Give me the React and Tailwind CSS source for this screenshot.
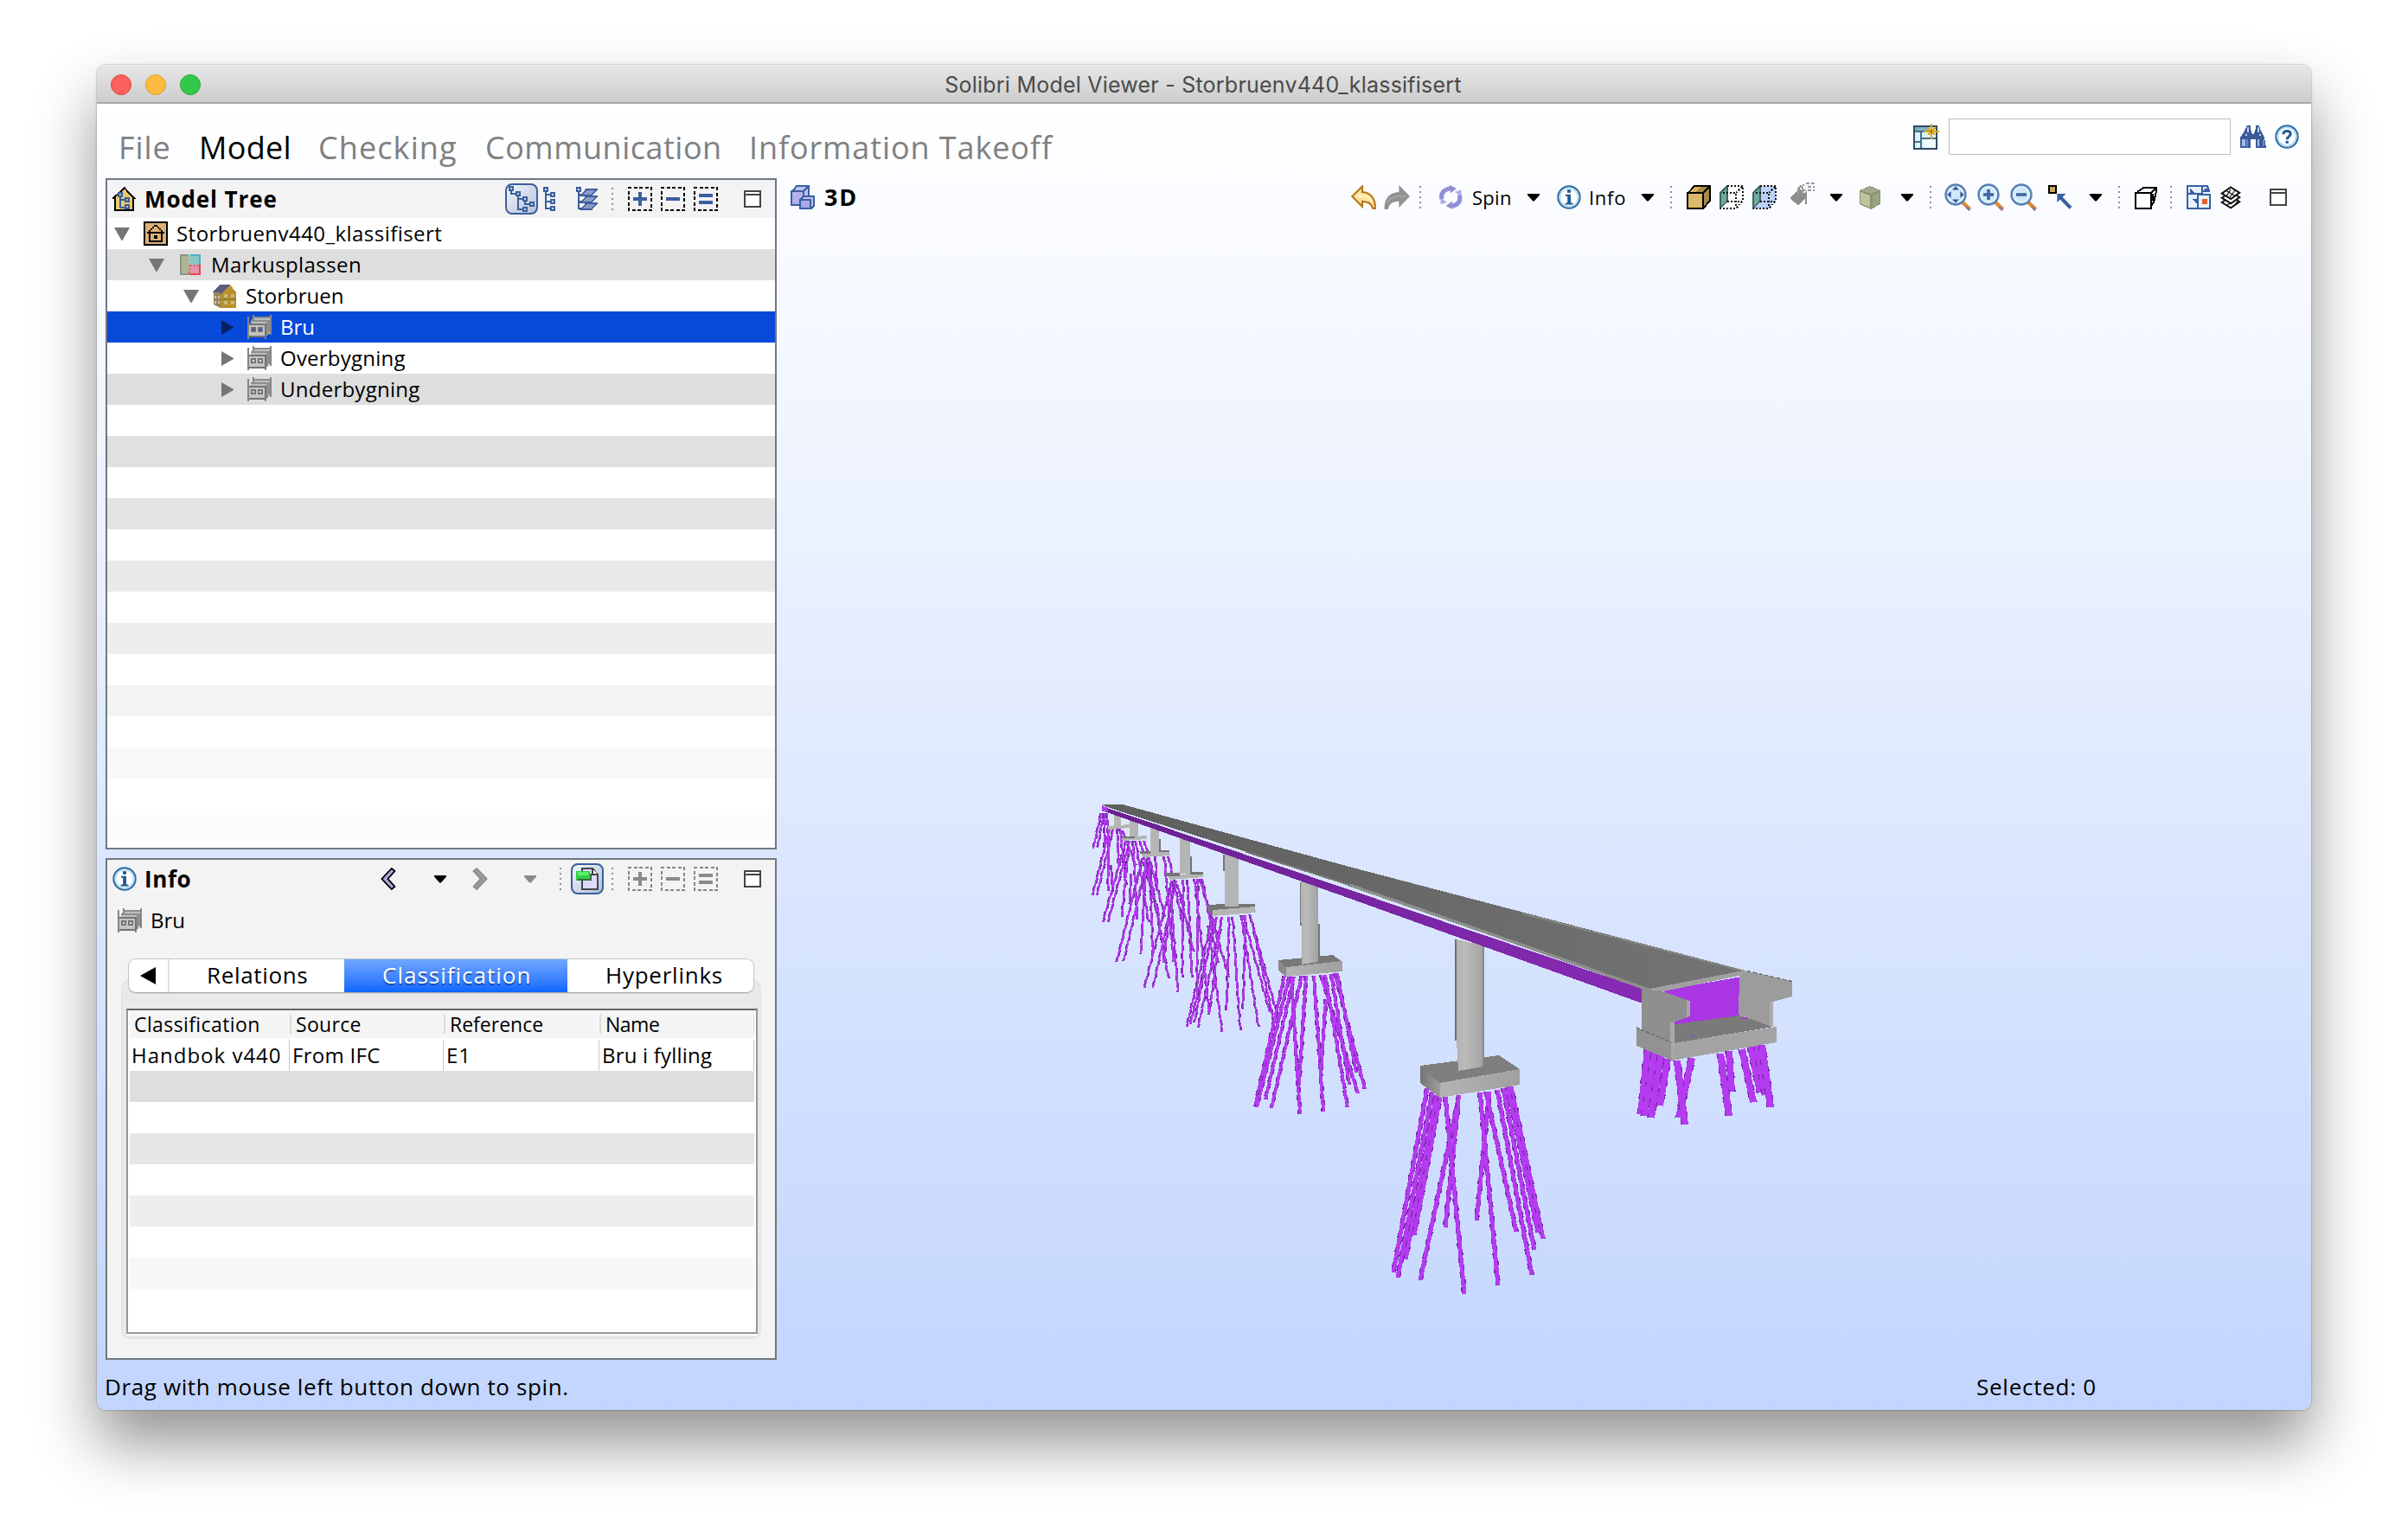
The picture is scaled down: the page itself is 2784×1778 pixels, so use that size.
import React from "react";

const BLUE = "#3a5f9f";

/* ---------- icons: drawn on a 14-unit grid, two pixels per unit ---------- */

function Icon({ children, className = "", w = 14, h = 14, smooth = false }) {
  return (
    <svg
      width={w * 2}
      height={h * 2}
      viewBox={`0 0 ${w} ${h}`}
      shapeRendering={smooth ? "auto" : "crispEdges"}
      className={`shrink-0 ${className}`}
      fill="none"
    >
      {children}
    </svg>
  );
}

function Node({ x, y }) {
  return <rect x={x + 0.5} y={y + 0.5} width="2" height="2" fill="#cdd6e6" stroke={BLUE} />;
}

function Dots({ className = "" }) {
  return (
    <svg width="2" height="26" className={`shrink-0 ${className}`} shapeRendering="crispEdges">
      {[0, 6, 12, 18, 24].map((y) => (
        <rect key={y} y={y} width="2" height="2" fill="#909090" />
      ))}
    </svg>
  );
}

function Caret({ className = "", color = "#000" }) {
  return (
    <svg width="14" height="9" viewBox="0 0 14 9" className={`shrink-0 ${className}`}>
      <path d="M0 0H14V1.5L7.8 8.6H6.2L0 1.5Z" fill={color} />
    </svg>
  );
}

function WindowIcon({ className = "" }) {
  return (
    <Icon w={10} h={10} className={className}>
      <rect x="0.5" y="0.5" width="9" height="9" fill="#fff" stroke="#444" />
      <path d="M0 2.5H10" stroke="#444" />
    </Icon>
  );
}

function BoxedSign({ kind, color = "#000", sign = BLUE, className = "" }) {
  return (
    <Icon className={className}>
      <rect x="0.5" y="0.5" width="13" height="13" stroke={color} strokeDasharray="2 1.25" strokeDashoffset="0.5" />
      {kind === "plus" && <path d="M3 7H11M7 3V11" stroke={sign} strokeWidth="2" />}
      {kind === "minus" && <path d="M3 7H11" stroke={sign} strokeWidth="2" />}
      {kind === "equal" && <path d="M3 5H11M3 9H11" stroke={sign} strokeWidth="2" />}
    </Icon>
  );
}

function ModelTreeIcon() {
  return (
    <Icon>
      <path d="M1.5 13.5V6.5H0.5L7 0.7L12.5 6.5H12V13.5Z" fill="#e9cb6b" stroke="#000" />
      <path d="M4.5 5V12M4.5 7.5H8M4.5 12H8" stroke={BLUE} />
      <rect x="3.5" y="3.5" width="2" height="2" stroke={BLUE} fill="#cbb98a" />
      <rect x="7.5" y="6.5" width="2" height="2" stroke={BLUE} fill="#cbb98a" />
      <rect x="7.5" y="10.5" width="2" height="2" stroke={BLUE} fill="#cbb98a" />
    </Icon>
  );
}

function HierarchyIcon() {
  return (
    <Icon w={15} h={15}>
      <path d="M1.5 3V4.5H4M5.5 6V13.5H8M5.5 7.5H8M9.5 9V10.5H12" stroke={BLUE} />
      <Node x={0} y={0} />
      <Node x={4} y={3} />
      <Node x={8} y={6} />
      <Node x={12} y={9} />
      <Node x={8} y={12} />
    </Icon>
  );
}

function FlatTreeIcon({ className }) {
  return (
    <Icon w={7} className={className}>
      <path d="M1.5 3V12.5H4M1.5 4.5H4M1.5 8.5H4" stroke={BLUE} />
      <Node x={0} y={0} />
      <Node x={4} y={3} />
      <Node x={4} y={7} />
      <Node x={4} y={11} />
    </Icon>
  );
}

function LayerTreeIcon({ className }) {
  return (
    <Icon w={13} className={className}>
      <path d="M1.5 3V12.5H4M1.5 4.5H4M1.5 8.5H4" stroke={BLUE} />
      <path d="M3 13H9L12 9.5H6Z" fill="#8b9cc4" stroke={BLUE} strokeWidth="0.8" />
      <path d="M3 9H9L12 5.5H6Z" fill="#8b9cc4" stroke={BLUE} strokeWidth="0.8" />
      <path d="M3 5H9L12 1.5H6Z" fill="#8b9cc4" stroke={BLUE} strokeWidth="0.8" />
      <Node x={0} y={0} />
    </Icon>
  );
}

function ProjectIcon() {
  return (
    <Icon>
      <rect x="0.5" y="0.5" width="13" height="13" fill="#dcb178" stroke="#000" />
      <path d="M2 6.5H12M3.5 6V11.5H10.5V6" stroke="#000" />
      <path d="M3 5H4V6H3ZM4 4H5V5H4ZM5 3H6V4H5ZM6 2H8V3H6ZM8 3H9V4H8ZM9 4H10V5H9ZM10 5H11V6H10Z" fill="#000" />
      <rect x="6" y="8" width="2" height="2" fill="#000" />
    </Icon>
  );
}

function SiteIcon() {
  return (
    <Icon>
      <rect x="1" y="1" width="12" height="12" fill="#8b9485" />
      <rect x="2" y="2" width="5" height="10" fill="#adb592" />
      <rect x="7" y="1" width="6" height="6" fill="#4fb0c0" />
      <rect x="7" y="2" width="5" height="5" fill="#8cc6c2" />
      <rect x="7" y="7" width="6" height="6" fill="#ea4550" />
      <rect x="7" y="7" width="5" height="5" fill="#e294b2" />
      <path d="M6.5 1V7" stroke="#7de6f0" strokeDasharray="1 1" />
      <path d="M6.5 7V13M7 7.5H12" stroke="#f06070" strokeDasharray="1 1" />
    </Icon>
  );
}

function BuildingIcon() {
  return (
    <Icon className="-mx-px" w={15}>
      <path d="M1 5L5 5V14L1 12Z" fill="#94855c" />
      <path d="M5 6L10.5 0.5L14 5V14H5Z" fill="#b8922c" />
      <path d="M0 5L1 4L5 0.5H10.5L5 6V5Z" fill="#5c5c82" />
      <path d="M1.5 7.5H4.5M1.5 10.5H4.5" stroke="#cfc4a8" strokeDasharray="1 1" strokeWidth="1.5" />
      <path d="M7 7H9M11 7H13M7 11H9M11 11H13" stroke="#d2b483" strokeWidth="2" />
      <path d="M5 9H14" stroke="#8d8431" strokeWidth="0.8" />
    </Icon>
  );
}

function StoreyIcon({ hole = "#fff" }) {
  return (
    <Icon>
      <path d="M3 2H13V11H11V5H2Z" fill="#bdbdbd" />
      <path d="M0.5 1V14M3.5 0V3M13.5 0V11.5M10.5 5V14" stroke="#868686" />
      <path d="M4 1.5H13M2 3.5H12M11.5 3V12M12.5 3V10" stroke="#8e8e8e" />
      <rect x="1" y="5" width="10" height="7" fill="#c4c4c4" />
      <path d="M1 5.5H11M1 12.5H11M10.5 5V13" stroke="#747474" />
      <rect x="2.5" y="7.5" width="2" height="2" fill={hole} stroke="#747474" />
      <rect x="6.5" y="7.5" width="2" height="2" fill={hole} stroke="#747474" />
    </Icon>
  );
}

function InfoIcon({ className }) {
  return (
    <Icon smooth className={className}>
      <circle cx="7" cy="7" r="6.3" fill="#fff" stroke="#2f6da6" strokeWidth="1.1" />
      <circle cx="7" cy="7" r="5.3" stroke="#b9dcf0" strokeWidth="0.9" />
      <rect x="6" y="2.6" width="2" height="1.8" fill="#1f5a94" />
      <path d="M5 5.4H8V10.2H9.2V11.2H4.9V10.2H6.1V6.4H5Z" fill="#1f5a94" />
    </Icon>
  );
}

function HelpIcon({ className }) {
  return (
    <Icon smooth className={className}>
      <circle cx="7" cy="7" r="6.3" fill="#fff" stroke="#2f6da6" strokeWidth="1.1" />
      <circle cx="7" cy="7" r="5.3" stroke="#b9dcf0" strokeWidth="0.9" />
      <path d="M4.9 5.6C4.9 3.2 9.1 3.2 9.1 5.4C9.1 6.8 7.1 6.8 7.1 8.6" stroke="#1f5a94" strokeWidth="1.5" />
      <rect x="6.3" y="9.4" width="1.6" height="1.5" fill="#1f5a94" />
    </Icon>
  );
}

function ThreeDIcon({ className }) {
  return (
    <Icon className={className}>
      <path d="M0.5 4.5L3.5 0.5H10.5V8.5L7.5 11.5H0.5Z" fill="#c4bff4" stroke={BLUE} />
      <path d="M0.5 3.5H7.5V11.5H0.5ZM7.5 3.5L10.5 0.5" stroke={BLUE} fill="#b5b0ee" />
      <path d="M5.5 8.5L7.5 6.5H13.5V12L12 13.5H5.5Z" fill="#c4bff4" stroke={BLUE} />
      <path d="M5.5 8.5H11.5V13.5H5.5Z" fill="#aba6ea" stroke={BLUE} />
    </Icon>
  );
}

function UndoIcon() {
  return (
    <Icon w={15} smooth>
      <path d="M0.7 6.5L6.5 0.7V4C11 4.2 14.2 7.6 13.9 13.4H12.6C11.6 10.4 10 9.6 6.5 9.4V12.4Z" fill="#fbe29a" stroke="#b87a1c" strokeWidth="1.1" />
      <path d="M2.8 6.2H7C9.8 6.4 11.6 7.8 12.4 9.8" stroke="#fff6d0" strokeWidth="1" />
    </Icon>
  );
}

function RedoIcon({ className }) {
  return (
    <Icon w={15} smooth className={className}>
      <path d="M15 6.5L8.7 0V4C3.5 4.2 0 7.5 0.3 14H2.4C3.2 10.6 4.8 9.6 8.7 9.4V13Z" fill="#929292" />
      <path d="M12.9 6.5H8C5 6.8 2.8 8 2 10.5" stroke="#a4a4a4" />
    </Icon>
  );
}

function SpinIcon({ className }) {
  return (
    <Icon smooth className={className}>
      <path d="M1.6 8.2C0.6 5 2.5 2.4 6.4 2" stroke="#9090da" strokeWidth="2.6" />
      <path d="M5.8 -0.2L10 2L6.6 4.6Z" fill="#8f92cf" />
      <path d="M11.6 5.6C12.8 9 10.8 11.8 7 12" stroke="#9090da" strokeWidth="2.6" />
      <path d="M7.6 9.2V14L3.8 12Z" fill="#8f92cf" />
      <path d="M9 4L12.6 2.8V6.5ZM4.6 10L0.8 11V7.4Z" fill="#a9a9f0" />
    </Icon>
  );
}

function SolidCubeIcon({ className }) {
  return (
    <Icon className={className}>
      <path d="M0.5 5L4.5 0.5H13.5V9L9.5 13.5H0.5Z" fill="#a88a45" stroke="#000" />
      <path d="M1.5 4.5L4.5 1.2H8L5 4.5Z" fill="#d9b25e" />
      <path d="M0.5 4.5H9.5V13.5H0.5Z" fill="#dcb96a" stroke="#000" />
      <path d="M9.5 4.5L13.5 0.5" stroke="#000" />
    </Icon>
  );
}

function DottedCubeIcon({ fill = "#fff", className }) {
  return (
    <Icon className={className}>
      <path d="M0.5 5L4.5 0.5H13.5V9L9.5 13.5H0.5Z" fill={fill} />
      <path d="M0.5 4.5L4.5 0.5V9L0.5 13.5Z" fill="#6cab9f" stroke="#45635e" strokeWidth="0.8" />
      <path d="M4.5 0.5H13.5V9L9.5 13.5H0.5" stroke="#111" strokeDasharray="1 1" />
      <path d="M2 4.5H9.5V13M9.5 4.5L13.5 0.5M4.5 9.5H13" stroke="#111" strokeDasharray="1 1" />
    </Icon>
  );
}

function PaintIcon({ className }) {
  return (
    <Icon className={className}>
      <path d="M0 8.5L5 3.5L8 6L9.5 5V12.5H8.5V9L4.5 13L0 9.5Z" fill="#8c8c8c" />
      <path d="M4.5 8V3.5L6 1.8L7 3V7" stroke="#9a9a9a" />
      <path d="M7 1.5H8M9 0.5H14M7 4.5H9M10 2.5H14M10 4.5H14" stroke="#9a9a9a" strokeDasharray="2 1" />
    </Icon>
  );
}

function GreenCubeIcon({ className }) {
  return (
    <Icon className={className}>
      <path d="M1 3L7 0.5L13 3V11L7.5 14L1 11Z" fill="#8c9470" />
      <path d="M2 3L7 1L12 3L7.5 5Z" fill="#a4aa90" />
      <path d="M1.6 4L7 6V13L1.6 10.6Z" fill="#bcc49c" />
      <path d="M8.4 6L12.4 4V10.6L8.4 12.8Z" fill="#9aa382" />
    </Icon>
  );
}

function LensIcon({ kind, className }) {
  return (
    <Icon w={16} h={16} smooth className={className}>
      <path d="M10 10.4L14.8 15" stroke="#e08a34" strokeWidth="2.2" />
      <path d="M12.6 13.6L14.6 15.6" stroke="#8a7a96" strokeWidth="1.2" />
      <circle cx="6.5" cy="6.5" r="5.7" fill="#cfe9fb" stroke="#5b81b5" strokeWidth="1.3" />
      <circle cx="6.5" cy="6.5" r="4.6" stroke="#e6f5ff" strokeWidth="0.8" />
      {kind === "plus" && <path d="M3.5 6.5H9.5M6.5 3.5V9.5" stroke="#3f649f" strokeWidth="1.8" />}
      {kind === "minus" && <path d="M3.5 6.5H9.5" stroke="#3f649f" strokeWidth="1.8" />}
      {kind === "fit" && (
        <path
          d="M6.5 1.6L8.5 3.8H4.500ZM6.5 11.4L8.5 9.2H4.5ZM1.6 6.5L3.8 4.5V8.5ZM11.4 6.5L9.2 4.5V8.5Z"
          fill="#3a5a96"
        />
      )}
    </Icon>
  );
}

function PickIcon({ className }) {
  return (
    <Icon smooth className={className}>
      <rect x="0.5" y="0.5" width="4" height="4" fill="#c9ac63" stroke="#000" />
      <path d="M7 7L13 13.2" stroke={BLUE} strokeWidth="2" />
      <path d="M5.2 5H10.2L5.2 10Z" fill={BLUE} />
    </Icon>
  );
}

function SectionBoxIcon({ className }) {
  return (
    <Icon className={className}>
      <path d="M0.5 4.5H9.5V13.5H0.5Z" fill="#fff" stroke="#000" />
      <path d="M1.5 4L5 1.5H12.5V3.5L11 10L9.5 12M9.5 4.5L12.5 1.5M10.5 5V9" stroke="#000" />
    </Icon>
  );
}

function MapIcon({ className }) {
  return (
    <Icon className={className}>
      <rect x="0.5" y="0.5" width="13" height="13" fill="#e6f3ff" />
      <path d="M0.5 0.5H9V5H0.5ZM0.5 5.5V13.5H13.5V5.5H6.5V13.5M9 3.5H13L12 0.5H9" stroke={BLUE} />
      <path d="M2 2L5 5H2ZM10 2H13L11 4ZM3 8H6V11Z" fill={BLUE} />
      <rect x="9" y="8" width="3" height="3" fill="#e1622a" />
    </Icon>
  );
}

function LayersIcon({ className }) {
  return (
    <Icon className={className} smooth>
      {[10, 7.4, 4.8].map((y) => (
        <path key={y} d={`M1.4 ${y}L6.5 ${y - 3.6}L11.6 ${y - 0.4}L6.6 ${y + 3.2}Z`} fill="#fff" stroke="#111" strokeWidth="1" />
      ))}
      <path d="M4 3.2L9 6.2M6.5 2.6L4 6.4M9 3L6 7" stroke="#111" strokeWidth="0.6" />
      <path d="M2 8L4.5 9M9 10.8L11 9.2M4 11.6L6.4 10.4" stroke="#111" strokeWidth="0.6" />
    </Icon>
  );
}

function LayoutIcon() {
  return (
    <Icon w={15} h={15}>
      <rect x="0.5" y="1.5" width="13" height="13" fill="#d9f3fb" stroke="#2f4a66" />
      <rect x="1" y="2" width="8" height="2" fill="#7fb2c4" />
      <path d="M1 4.5H9M4.5 5V14M1 10.5H4.5M4.5 8.5H13" stroke="#4a6e8a" />
      <rect x="6" y="9" width="7" height="5" fill="#eefbff" />
      <path d="M9 3H12V6H9Z" fill="#9ad04a" />
      <path d="M10.5 0V9M6 4.5H15M8.5 2.5L12.5 6.5M12.5 2.5L8.5 6.5" stroke="#dba413" />
      <rect x="10" y="4" width="1" height="1" fill="#a85a10" />
    </Icon>
  );
}

function BinocularsIcon({ className }) {
  return (
    <Icon w={15} h={13} className={className}>
      <path d="M4 0H6V2L7 5H8L9 2V0H11L12 3L14 7L15 13H9V8H6V13H0V7L2 4Z" fill="#3b5a98" />
      <path d="M1.5 8V12M2.5 8V12M10.5 8V12" stroke="#a9b9e2" />
      <path d="M4.5 1V4M10.5 1V4M3.5 5V6M11.5 5V6" stroke="#c3cff0" />
      <path d="M4 12.5V8M13.5 12V8" stroke="#6c86c4" />
    </Icon>
  );
}

function Chevron({ flip = false, className = "" }) {
  return (
    <Icon w={9} h={13} smooth className={`${flip ? "-scale-x-100" : ""} ${className}`}>
      <path
        d="M8.2 2L6.4 0.5L0.7 6.5L6.4 12.5L8.2 11L4.2 6.5Z"
        fill={flip ? "#9b9b9b" : "#aaa6e0"}
        stroke={flip ? "#8d8d8d" : "#000"}
        strokeWidth="0.9"
      />
    </Icon>
  );
}

function PageIcon() {
  return (
    <Icon w={13}>
      <path d="M3.5 1H9.5L12.5 4.5V13H3.5Z" fill="#dcdaf6" stroke="#454550" />
      <path d="M9.5 1.5V4.5H12.5" stroke="#454550" fill="#fff" />
      <rect x="0" y="2.4" width="8" height="5.4" fill="#2fd043" />
      <rect x="1" y="3" width="6" height="2" fill="#5cf06e" />
      <path d="M1 7.5H8.5V4" stroke="#3a6b42" strokeWidth="0.7" />
    </Icon>
  );
}

function ToggleButton({ children }) {
  return (
    <div className="flex h-9 w-[38px] shrink-0 items-center justify-center rounded-lg border-2 border-[#3a5f9f] bg-linear-to-br from-[#f3f6fa] to-[#b3c0d9]">
      {children}
    </div>
  );
}

/* ---------- model tree ---------- */

const TREE = [
  { label: "Storbruenv440_klassifisert", pad: "pl-2", track: "tracking-[0.46px]", open: true, icon: <ProjectIcon /> },
  { label: "Markusplassen", pad: "pl-12", track: "tracking-[0.42px]", open: true, icon: <SiteIcon /> },
  { label: "Storbruen", pad: "pl-[88px]", open: true, icon: <BuildingIcon /> },
  { label: "Bru", pad: "pl-32", selected: true, icon: <StoreyIcon hole="#0749d9" /> },
  { label: "Overbygning", pad: "pl-32", track: "tracking-[0.22px]", icon: <StoreyIcon /> },
  { label: "Underbygning", pad: "pl-32", track: "tracking-[0.25px]", icon: <StoreyIcon hole="#e4e4e4" /> },
];

const ROW_BG = ["bg-white", "bg-[#dedede]", "bg-white", "bg-[#0749d9]", "bg-white", "bg-[#dedede]"];
const TREE_FILL = [
  "bg-white", "bg-[#e0e0e0]", "bg-white", "bg-[#e4e4e4]", "bg-white", "bg-[#e9e9e9]", "bg-white",
  "bg-[#eeeeee]", "bg-white", "bg-[#f3f3f3]", "bg-white", "bg-[#f8f8f8]", "bg-white", "bg-[#fcfcfc]",
];
const TABLE_FILL = [
  "bg-[#dedede]", "bg-white", "bg-[#e6e6e6]", "bg-white", "bg-[#eeeeee]", "bg-white", "bg-[#f7f7f7]",
];

function Arrow({ open, selected }) {
  return (
    <svg width="18" height="17" viewBox="0 0 18 17" className="shrink-0">
      {open ? <path d="M0 1H18L9.5 16H8.5Z" fill="#757575" /> : <path d="M4 0L19 8.5L4 17Z" fill={selected ? "#0a1f66" : "#757575"} />}
    </svg>
  );
}

function ModelTreePanel() {
  return (
    <section className="flex h-[776px] flex-col border-2 border-[#707880] bg-white">
      <header className="flex h-11 shrink-0 items-center bg-[#f3f3f3] pl-1.5 pr-4">
        <ModelTreeIcon />
        <h2 className="ml-[9px] text-[26px] font-bold tracking-[0.9px]">Model Tree</h2>
        <div className="ml-auto flex items-center">
          <ToggleButton><HierarchyIcon /></ToggleButton>
          <FlatTreeIcon className="ml-1.5" />
          <LayerTreeIcon className="ml-6" />
          <Dots className="ml-[15px]" />
          <BoxedSign kind="plus" className="ml-[17px]" />
          <BoxedSign kind="minus" className="ml-2.5" />
          <BoxedSign kind="equal" className="ml-2.5" />
          <WindowIcon className="ml-[30px]" />
        </div>
      </header>
      {TREE.map((r, i) => (
        <div key={r.label} className={`flex h-9 shrink-0 items-center ${r.pad} ${ROW_BG[i]}`}>
          <Arrow open={r.open} selected={r.selected} />
          <span className="ml-4 flex w-7 justify-center">{r.icon}</span>
          <span className={`ml-2.5 text-[24px] leading-9 ${r.track || ""} ${r.selected ? "text-white" : ""}`}>{r.label}</span>
        </div>
      ))}
      {TREE_FILL.map((c, i) => (
        <div key={i} className={`h-9 shrink-0 ${c}`} />
      ))}
    </section>
  );
}

/* ---------- info panel ---------- */

function InfoPanel() {
  return (
    <section className="mt-2.5 flex h-[580px] flex-col border-2 border-[#707880] bg-[#f3f3f3]">
      <header className="flex h-11 shrink-0 items-center pl-1.5 pr-4">
        <InfoIcon />
        <h2 className="ml-[9px] text-[26px] font-bold tracking-[0.6px]">Info</h2>
        <div className="ml-auto flex items-center">
          <Chevron />
          <Caret className="ml-11" />
          <Chevron flip className="ml-[30px]" />
          <Caret className="ml-[42px]" color="#8a8a8a" />
          <Dots className="ml-[27px]" />
          <span className="ml-[11px]"><ToggleButton><PageIcon /></ToggleButton></span>
          <Dots className="ml-[9px]" />
          <BoxedSign kind="plus" color="#858585" sign="#8a8a8a" className="ml-[17px]" />
          <BoxedSign kind="minus" color="#858585" sign="#8a8a8a" className="ml-2.5" />
          <BoxedSign kind="equal" color="#858585" sign="#8a8a8a" className="ml-2.5" />
          <WindowIcon className="ml-[30px]" />
        </div>
      </header>
      <div className="mt-2 flex h-9 shrink-0 items-center pl-3">
        <StoreyIcon hole="#e4e4e4" />
        <span className="ml-2.5 text-[24px] leading-9">Bru</span>
      </div>

      <div className="mx-4 mt-[26px] flex flex-col">
        <div className="z-10 mx-2 flex h-10 shrink-0 overflow-hidden rounded-[9px] border border-[#c4c4c4] border-b-[#a9a9a9] bg-white text-[26px] leading-[37px] shadow-[0_1px_1px_rgba(0,0,0,0.08)]">
          <div className="flex w-[47px] items-center justify-center border-r-2 border-[#e2e2e2] pr-0.5">
            <svg width="18" height="20" viewBox="0 0 18 20"><path d="M0 10L18 0V20Z" fill="#000" /></svg>
          </div>
          <div className="w-[202px] pl-[43px] tracking-[0.65px]">Relations</div>
          <div className="-my-px w-[258px] bg-linear-to-b from-[#73a8ff] to-[#0464ff] py-px pl-11 tracking-[1px] text-white [text-shadow:0_2px_1px_rgba(0,0,0,0.4)]">Classification</div>
          <div className="pl-11 tracking-[0.75px]">Hyperlinks</div>
        </div>
        <div className="-mt-4 flex h-[416px] flex-col rounded-[10px] border-2 border-[#e5e5e5] bg-[#e9e9e9] pl-1 pr-0.5 pt-8">
          <div className="flex h-[376px] flex-col border-2 border-[#979797] border-t-[#666] bg-white px-0.5 shadow-[0_2px_0_#fff]">
            <div className="flex h-8 shrink-0 items-center bg-[#f5f5f5] text-[23px] leading-[30px]">
              <div className="w-[185px] pl-[5px] tracking-[0.4px]">Classification</div>
              <div className="h-[22px] w-0.5 bg-[#dcdcdc]" />
              <div className="w-[176px] pl-[5px] tracking-[0.3px]">Source</div>
              <div className="h-[22px] w-0.5 bg-[#dcdcdc]" />
              <div className="w-[178px] pl-[5px]">Reference</div>
              <div className="h-[22px] w-0.5 bg-[#dcdcdc]" />
              <div className="flex-1 pl-[5px] tracking-[-0.5px]">Name</div>
              <div className="h-[22px] w-px bg-[#dcdcdc]" />
            </div>
            <div className="mt-0.5 flex h-9 shrink-0 items-center text-[24px] leading-9">
              <div className="h-9 w-[185px] whitespace-nowrap border-r border-[#c8c8c8] pl-0.5 tracking-[1px]">Handbok v440</div>
              <div className="h-9 w-[178px] border-r border-[#c8c8c8] pl-[3px] tracking-[0.3px]">From IFC</div>
              <div className="h-9 w-[180px] border-r border-[#c8c8c8] pl-[3px] tracking-[1px]">E1</div>
              <div className="h-9 flex-1 border-r border-[#c8c8c8] pl-[3px] tracking-[0.2px]">Bru i fylling</div>
            </div>
            {TABLE_FILL.map((c, i) => (
              <div key={i} className={`h-9 shrink-0 ${c}`} />
            ))}
          </div>
        </div>
      </div>
    </section>
  );
}

/* ---------- 3D scene ---------- */

/* Pile groups: [x1, y1, x2, y2] in scene units */
const PIER_1_PILES = [
  [1650, 1258, 1611, 1471], [1656, 1262, 1616, 1477], [1661, 1266, 1625, 1456], [1665, 1268, 1635, 1428],
  [1687, 1266, 1642, 1480], [1686, 1275, 1671, 1419], [1671, 1268, 1693, 1496],
  [1722, 1262, 1707, 1411], [1711, 1263, 1732, 1486], [1718, 1262, 1753, 1424],
  [1731, 1260, 1771, 1474], [1738, 1258, 1774, 1445], [1747, 1256, 1784, 1432], [1743, 1256, 1778, 1425],
];
const ABUTMENT_PILES = [
  [1905, 1213, 1897, 1288], [1913, 1217, 1901, 1290], [1920, 1220, 1909, 1292], [1928, 1224, 1919, 1278],
  [1956, 1223, 1941, 1292], [1939, 1226, 1948, 1300], [1999, 1215, 2002, 1262], [1989, 1218, 1999, 1290],
  [2024, 1210, 2035, 1263], [2031, 1209, 2041, 1266], [2014, 1213, 2027, 1274], [2037, 1208, 2047, 1280],
];
const PIER_2_PILES = [
  [1485, 1128, 1451, 1279], [1491, 1128, 1453, 1280], [1496, 1129, 1463, 1271], [1505, 1128, 1470, 1281],
  [1493, 1130, 1503, 1288], [1510, 1128, 1502, 1255], [1519, 1128, 1530, 1285], [1533, 1155, 1527, 1240],
  [1527, 1127, 1570, 1264], [1532, 1127, 1558, 1280], [1543, 1125, 1578, 1259], [1546, 1125, 1568, 1240], [1539, 1126, 1560, 1254],
];
const FAR_PILES = [
  [1402, 1060, 1372, 1187], [1407, 1060, 1376, 1184], [1413, 1060, 1385, 1188], [1404, 1062, 1381, 1182],
  [1397, 1070, 1413, 1193], [1421, 1060, 1418, 1168], [1425, 1060, 1434, 1191], [1440, 1058, 1437, 1167],
  [1437, 1058, 1468, 1170], [1445, 1057, 1478, 1178], [1446, 1060, 1473, 1182], [1435, 1058, 1455, 1187], [1412, 1066, 1398, 1173],
  [1355, 1018, 1323, 1142], [1360, 1018, 1333, 1142], [1357, 1019, 1345, 1113], [1353, 1026, 1362, 1147],
  [1368, 1017, 1367, 1130], [1373, 1017, 1378, 1130], [1381, 1016, 1398, 1170], [1387, 1016, 1421, 1130],
  [1390, 1016, 1408, 1113], [1361, 1022, 1380, 1100], [1385, 1016, 1384, 1150],
  [1321, 992, 1291, 1112], [1327, 992, 1299, 1111], [1325, 1000, 1319, 1103], [1329, 996, 1333, 1104],
  [1336, 990, 1338, 1030], [1346, 990, 1357, 1112], [1351, 990, 1367, 1066], [1328, 1000, 1351, 1131], [1322, 996, 1342, 1070],
  [1302, 972, 1275, 1066], [1306, 972, 1281, 1066], [1305, 978, 1297, 1060], [1310, 972, 1315, 1063],
  [1313, 972, 1328, 1066], [1318, 972, 1340, 1058], [1323, 972, 1347, 1060], [1308, 1010, 1306, 1045],
  [1283, 958, 1263, 1035], [1287, 958, 1268, 1035], [1282, 965, 1281, 1030], [1292, 958, 1293, 1000],
  [1295, 958, 1302, 1023], [1298, 960, 1313, 1000], [1285, 1000, 1286, 1033],
  [1273, 940, 1264, 981], [1276, 940, 1269, 980], [1280, 940, 1282, 981], [1277, 940, 1277, 980],
];

function Piles({ items, width }) {
  return (
    <g>
      {items.map(([x1, y1, x2, y2], i) => (
        <g key={i} fill="none">
          <line x1={x1} y1={y1} x2={x2} y2={y2} stroke="#b53bf0" strokeWidth={width} />
          <line x1={x1 - width / 2} y1={y1} x2={x2 - width / 2} y2={y2} stroke="#7b2ca9" strokeWidth="1.3" strokeDasharray="6 11" />
          <line x1={x1 + width / 2} y1={y1} x2={x2 + width / 2} y2={y2} stroke="#7b2ca9" strokeWidth="1.3" strokeDasharray="6 11" strokeDashoffset="9" />
        </g>
      ))}
    </g>
  );
}

function BridgeScene() {
  return (
    <svg width="1774" height="1322" viewBox="898 250 1774 1322" className="block">
      <defs>
        <linearGradient id="deck" gradientUnits="userSpaceOnUse" x1="1274" y1="0" x2="2018" y2="0">
          <stop offset="0" stopColor="#5e5e5e" />
          <stop offset="1" stopColor="#747474" />
        </linearGradient>
        <linearGradient id="girder" gradientUnits="userSpaceOnUse" x1="1274" y1="0" x2="1898" y2="0">
          <stop offset="0" stopColor="#6a2090" />
          <stop offset="1" stopColor="#872bb5" />
        </linearGradient>
        <linearGradient id="column" x1="0" y1="0" x2="1" y2="0">
          <stop offset="0" stopColor="#b3b3b3" />
          <stop offset="0.35" stopColor="#bababa" />
          <stop offset="1" stopColor="#a2a2a2" />
        </linearGradient>
        <linearGradient id="capSide" x1="0" y1="0" x2="1" y2="0">
          <stop offset="0" stopColor="#747474" />
          <stop offset="1" stopColor="#9c9c9c" />
        </linearGradient>
        <linearGradient id="capFront" x1="0" y1="0" x2="1" y2="0">
          <stop offset="0" stopColor="#b4b4b4" />
          <stop offset="1" stopColor="#a0a0a0" />
        </linearGradient>
      </defs>
      <g shapeRendering="crispEdges">
        <Piles items={FAR_PILES} width={2.3} />
        <g fill="#b5b5b5">
          <path d="M1288 938H1296V956H1288ZM1281 955L1306 953V957L1281 959Z" />
          <path d="M1306 946H1316V968H1306ZM1296 968L1326 966V970L1298 972Z" />
          <path d="M1330 952H1340V985H1330ZM1320 986L1352 984L1353 989L1321 991Z" />
          <path d="M1364 966H1376V1010H1364ZM1351 1012L1391 1009V1014L1352 1017Z" />
          <path d="M1416 986H1432V1048H1416ZM1401 1052L1451 1048L1452 1055L1402 1059Z" />
        </g>
        <path d="M1296 967H1312V969H1296ZM1318 984H1330V987H1318ZM1340 983H1352V985H1340ZM1348 1009H1364V1013H1348ZM1376 1008H1391V1011H1376ZM1396 1046L1416 1045V1048L1432 1048V1045H1451V1048L1402 1052V1059L1397 1054ZM1340 970H1342V984H1340ZM1376 990H1378V1008H1376ZM1414 988H1416V1007H1414Z" fill="#757575" />

        <Piles items={PIER_2_PILES} width={3.8} />
        <path d="M1478 1110L1541 1104L1552 1112L1487 1119Z" fill="#787878" />
        <path d="M1478 1110L1487 1118V1129L1478 1122Z" fill="#8a8a8a" />
        <path d="M1487 1118L1552 1111V1123L1487 1129Z" fill="url(#capFront)" />
        <path d="M1503 1020H1505V1070H1503ZM1524 1068H1526V1112H1524Z" fill="#757575" />
        <path d="M1504 1018L1524 1024V1112L1505 1115Z" fill="url(#column)" />

        <Piles items={PIER_1_PILES} width={5} />
        <path d="M1642 1232L1733 1220L1757 1236L1664 1252Z" fill="#7e7e7e" />
        <path d="M1642 1232L1664.500 1252V1269L1642 1252Z" fill="url(#capSide)" />
        <path d="M1664.500 1252L1757 1236V1254L1664.500 1269Z" fill="url(#capFront)" />
        <path d="M1682 1086H1685V1203H1682Z" fill="#707070" />
        <path d="M1684 1086L1715 1093V1233L1686 1238L1684 1203Z" fill="url(#column)" />
        <path d="M1714 1094H1716V1233H1714Z" fill="#8a8a8a" />

        <path d="M1274 931L1280 934L1899 1143V1160L1560 1038.500L1274 937Z" fill="url(#girder)" />
        <path d="M1274 930H1298L1560 1002L2018 1122L1910 1145L1899 1143L1710 1075L1560 1023L1280 933Z" fill="url(#deck)" />
        <path d="M1560 1023L1710 1075L1900 1142L1906 1144" fill="none" stroke="#8e8e8e" strokeWidth="3.500" />
        <path d="M1440 984.500L1560 1023" fill="none" stroke="#777" strokeWidth="2" />
        <path d="M1760 1056L2018 1123" fill="none" stroke="#858585" strokeWidth="2" />
        <path d="M1274 932L1280 933L1281 938H1274Z" fill="#b53bf0" />

        <Piles items={ABUTMENT_PILES} width={8} />
        <path d="M1892 1188L1933 1204V1226L1892 1209Z" fill="#929292" />
        <path d="M1933 1206L2053.500 1187V1205L1933 1226Z" fill="#a3a3a3" />
        <path d="M1935 1183L2008 1173L2050 1187L1935 1206Z" fill="#7a7a7a" />
        <path d="M1923 1145L2011 1129.500V1174L1937 1184L1930 1182V1160Z" fill="#a936e2" />
        <path d="M1902 1144L2016 1122L2020 1126L1924 1146Z" fill="#a0a0a0" />
        <path d="M1897.500 1143L1920 1145.500L1953.500 1157V1175L1934 1182V1207L1898 1191Z" fill="#8f8f8f" />
        <path d="M1950 1156.500L1953.500 1157V1175L1950 1176.500ZM1931 1182L1936 1181V1223L1932 1225Z" fill="#a8a8a8" />
        <path d="M2011 1128L2020 1122.500L2072 1134.500V1152L2050 1158V1187.500L2010 1173Z" fill="#9c9c9c" />
        <path d="M2046 1158H2050V1187.500L2046 1186Z" fill="#acacac" />
        <path d="M2020 1122.500L2072 1134.500" stroke="#6e6e6e" strokeWidth="1.500" strokeDasharray="4 3" />
        <path d="M1892 1188L1932 1205" stroke="#6e6e6e" strokeWidth="1.500" strokeDasharray="4 2" />
        <path d="M1956 1196H1958V1198H1956ZM1988 1192H1990V1194H1988ZM2010 1186H2012V1188H2010ZM2014 1176H2020V1178H2014Z" fill="#a23ad0" />
      </g>
    </svg>
  );
}

function ViewerToolbar() {
  return (
    <header className="flex h-11 shrink-0 items-center pl-4 pr-7 text-[22px]">
      <ThreeDIcon />
      <h2 className="ml-[11px] text-[27px] font-bold leading-[36px] tracking-[1.8px]">3D</h2>
      <div className="ml-auto flex items-center">
        <UndoIcon />
        <RedoIcon className="ml-2" />
        <Dots className="ml-[11px]" />
        <SpinIcon className="ml-[21px]" />
        <span className="ml-2.5 w-[55px] tracking-[0.3px]">Spin</span>
        <Caret className="ml-[9px]" />
        <InfoIcon className="ml-5" />
        <span className="ml-[9px] w-[53px] tracking-[0.7px]">Info</span>
        <Caret className="ml-2" />
        <Dots className="ml-[19px]" />
        <SolidCubeIcon className="ml-[17px]" />
        <DottedCubeIcon className="ml-2.5" />
        <DottedCubeIcon fill="#bcd0fb" className="ml-2.5" />
        <PaintIcon className="mb-1.5 ml-4" />
        <Caret className="ml-[18px]" />
        <GreenCubeIcon className="ml-[18px]" />
        <Caret className="ml-[22px]" />
        <Dots className="ml-[19px]" />
        <LensIcon kind="fit" className="ml-[15px]" />
        <LensIcon kind="plus" className="ml-1.5" />
        <LensIcon kind="minus" className="ml-1.5" />
        <PickIcon className="ml-3" />
        <Caret className="ml-5" />
        <Dots className="ml-[19px]" />
        <SectionBoxIcon className="ml-[17px]" />
        <Dots className="ml-[13px]" />
        <MapIcon className="ml-[17px]" />
        <LayersIcon className="ml-2.5" />
        <WindowIcon className="ml-[30px]" />
      </div>
    </header>
  );
}

export default function App() {
  return (
    <div className="h-[1778px] w-[2784px] overflow-hidden bg-white pl-[112px] pt-[75px] font-['Open_Sans','Noto_Sans',sans-serif] text-black">
      <div className="flex h-[1555px] w-[2560px] flex-col overflow-hidden rounded-[10px] shadow-[0_0_2px_rgba(0,0,0,0.5),0_38px_70px_rgba(0,0,0,0.43)]">
        <div className="flex h-[45px] shrink-0 items-center border-b-2 border-t border-b-[#a9a9a9] border-t-[#f4f4f4] bg-linear-to-b from-[#e6e6e6] to-[#cdcdcd] pl-4">
          <div className="flex w-[300px] gap-4 pt-px">
            <span className="size-6 rounded-full border border-[#e2463f] bg-[#fc605c]" />
            <span className="size-6 rounded-full border border-[#dfa023] bg-[#fdbc40]" />
            <span className="size-6 rounded-full border border-[#27aa35] bg-[#34c84a]" />
          </div>
          <div className="flex-1 pr-[318px] pt-[3px] text-center font-['Inter',sans-serif] text-[25px] tracking-[0.22px] text-[#4a4a4a]">
            Solibri Model Viewer - Storbruenv440_klassifisert
          </div>
        </div>

        <div className="flex flex-1 flex-col bg-linear-to-b from-white to-[#c2d5fe]">
          <nav className="flex h-[86px] shrink-0 items-start">
            <ul className="mt-[29px] flex text-[36px] leading-[44px] text-[#808080]">
              <li className="ml-[25px] w-[93px] tracking-[0.9px]">File</li>
              <li className="w-[138px] tracking-[0.3px] text-black">Model</li>
              <li className="w-[193px] tracking-[1.1px]">Checking</li>
              <li className="w-[305px] tracking-[0.5px]">Communication</li>
              <li className="tracking-[0.9px]">Information Takeoff</li>
            </ul>
            <div className="ml-auto mr-3.5 mt-[17px] flex h-[42px] items-center">
              <LayoutIcon />
              <div className="ml-[11px] h-[42px] w-[326px] border border-[#bdbdbd] bg-white" />
              <BinocularsIcon className="ml-[11px]" />
              <HelpIcon className="ml-2.5" />
            </div>
          </nav>

          <main className="flex h-[1366px] shrink-0">
            <aside className="ml-2.5 w-[776px] shrink-0">
              <ModelTreePanel />
              <InfoPanel />
            </aside>
            <div className="flex flex-1 flex-col">
              <ViewerToolbar />
              <BridgeScene />
            </div>
          </main>

          <footer className="flex flex-1 items-center pl-[9px] pt-1 text-[26px]">
            <span className="w-[2164px] tracking-[0.62px]">Drag with mouse left button down to spin.</span>
            <span className="tracking-[0.75px]">Selected: 0</span>
          </footer>
        </div>
      </div>
    </div>
  );
}
